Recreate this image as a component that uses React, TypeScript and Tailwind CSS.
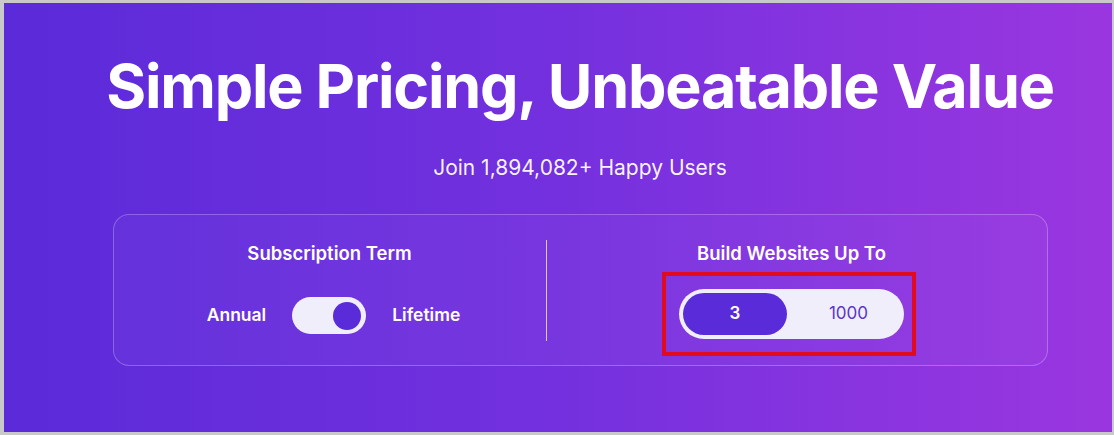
export default function App() {
  return (
    <div className="w-[1114px] h-[435px] bg-[#c9c9c9] pt-[3px] pl-[4px] pr-[2px] pb-[3px]">
      <div
        className="h-full flex flex-col items-center pl-[44px] bg-gradient-to-r from-[#5b2ad9] via-[#7430de] to-[#9a36e0] text-white"
        style={{ fontFamily: "Inter, 'Noto Sans', sans-serif" }}
      >
        <h1 className="mt-[46px] text-[61px] leading-[74px] font-bold tracking-[-0.02em]">
          Simple Pricing, Unbeatable Value
        </h1>
        <p className="mt-[31px] text-[21px] leading-[28px] text-white/95">
          Join 1,894,082+ Happy Users
        </p>
        <div className="mt-[32px] w-[935px] h-[152px] rounded-2xl border border-white/25 bg-white/[0.03] flex items-center">
          {/* term */}
          <div className="w-[432px] h-full flex flex-col items-center pt-[26px]">
            <div className="text-[18.5px] font-semibold leading-[24px]">Subscription Term</div>
            <div className="mt-[32px] pl-[8px] flex items-center">
              <span className="text-[17.5px] font-semibold">Annual</span>
              <div className="ml-[26px] mr-[26px] w-[74px] h-[37px] rounded-full bg-[#f1eefc] flex items-center justify-end pr-[5px]">
                <div className="w-[28px] h-[28px] rounded-full bg-[#5a2bd9]" />
              </div>
              <span className="text-[17.5px] font-semibold">Lifetime</span>
            </div>
          </div>
          <div className="w-px h-[101px] bg-white/70" />
          {/* sites */}
          <div className="flex-1 h-full flex flex-col items-center pt-[26px] pr-[10px]">
            <div className="text-[18.5px] font-semibold leading-[24px]">Build Websites Up To</div>
            <div className="mt-[7px] mr-[5px] border-[4px] border-[#e10a1e] pl-[13px] pr-[8px] py-[13px]">
              <div className="w-[225px] h-[50px] rounded-full bg-[#f1eefc] p-[4px] flex items-center">
                <div className="w-[104px] h-full rounded-full bg-[#5a2bd9] flex items-center justify-center text-[17px] font-semibold">
                  3
                </div>
                <div className="flex-1 flex items-center justify-center text-[17px] text-[#5a35c9] pl-[10px]">
                  1000
                </div>
              </div>
            </div>
          </div>
        </div>
      </div>
    </div>
  );
}
